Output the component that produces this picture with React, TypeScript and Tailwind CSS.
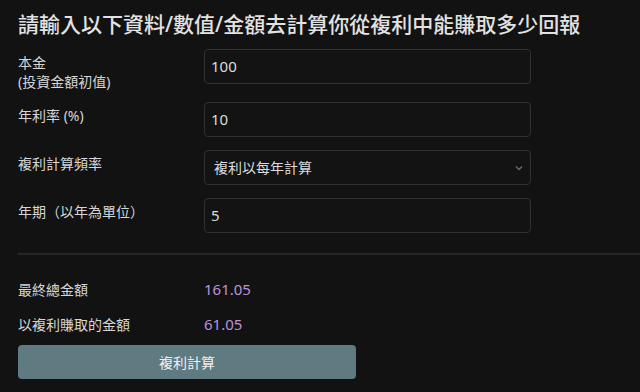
import React from 'react';

const font = { fontFamily: '"Noto Sans", "Noto Sans CJK TC", sans-serif' };

type RowProps = {
  label: React.ReactNode;
  height: string;
  children: React.ReactNode;
};

const Row: React.FC<RowProps> = ({ label, height, children }) => (
  <div className={`flex items-start ${height}`}>
    <div className="w-[186px] pt-[4px] text-[14px] leading-[19px] text-[#d6d6d6]">{label}</div>
    {children}
  </div>
);

const Field: React.FC<{ value: string }> = ({ value }) => (
  <div className="flex h-[35px] w-[327px] items-center rounded-[4px] border border-[#313131] bg-[#131313] pl-[6px] text-[15px] text-[#dcdcdc]">
    {value}
  </div>
);

export default function App() {
  return (
    <div className="h-[392px] w-[640px] overflow-hidden bg-[#121212] pl-[18px]" style={font}>
      <h1 className="pt-[9px] text-[21px] font-medium leading-[30px] text-[#e2e2e2]">
        請輸入以下資料/數值/金額去計算你從複利中能賺取多少回報
      </h1>

      <div className="mt-[10px]">
        <Row
          height="h-[53px]"
          label={
            <>
              <div>本金</div>
              <div>(投資金額初值)</div>
            </>
          }
        >
          <Field value="100" />
        </Row>
        <Row height="h-[48px]" label="年利率 (%)">
          <Field value="10" />
        </Row>
        <Row height="h-[48px]" label="複利計算頻率">
          <div className="flex h-[35px] w-[327px] items-center justify-between rounded-[4px] border border-[#313131] bg-[#131313] pl-[9px] pr-[6px] text-[14px] text-[#dcdcdc]">
            <span>複利以每年計算</span>
            <svg width="10" height="10" viewBox="0 0 10 10" fill="none">
              <path d="M2 3.5l3 3 3-3" stroke="#6a6a6a" strokeWidth="1.4" />
            </svg>
          </div>
        </Row>
        <Row height="h-[48px]" label="年期（以年為單位）">
          <Field value="5" />
        </Row>
      </div>

      <div className="mt-[7px] h-[2px] bg-[#262626]" />

      <div className="mt-[24px] flex h-[20px] items-center text-[14px]">
        <span className="w-[186px] text-[#d6d6d6]">最終總金額</span>
        <span className="text-[15px] text-[#bb92de]">161.05</span>
      </div>
      <div className="mt-[15px] flex h-[20px] items-center text-[14px]">
        <span className="w-[186px] text-[#d6d6d6]">以複利賺取的金額</span>
        <span className="text-[15px] text-[#bb92de]">61.05</span>
      </div>

      <button className="mt-[11px] flex h-[34px] w-[338px] items-center justify-center rounded-[4px] bg-[#5f7a80] text-[14px] text-[#f0f0f0]">
        複利計算
      </button>
    </div>
  );
}
